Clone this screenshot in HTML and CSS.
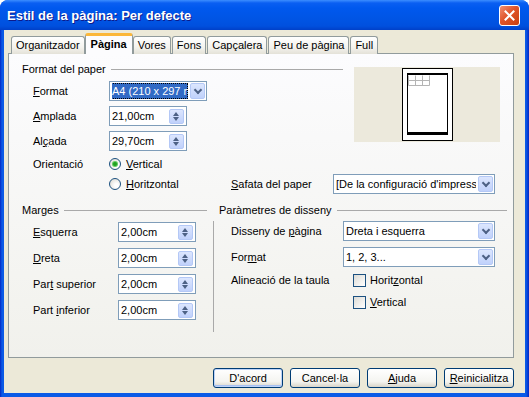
FILE: index.html
```html
<!DOCTYPE html>
<html lang="ca">
<head>
    <meta charset="UTF-8">
    <title>Estil de la pàgina: Per defecte</title>
    <link rel="stylesheet" href="styles.css">
</head>
<body>
<div class="window">
    <div class="titlebar">
        <span class="title">Estil de la pàgina: Per defecte</span>
        <span class="close">
            <svg width="11" height="11" viewBox="0 0 11 11"><path d="M1.5 1.5l8 8M9.5 1.5l-8 8" stroke="#fff" stroke-width="2" stroke-linecap="square"/></svg>
        </span>
    </div>

    <div class="client">
        <div class="tabs">
            <div class="tab">Organitzador</div>
            <div class="tab active">Pàgina</div>
            <div class="tab">Vores</div>
            <div class="tab">Fons</div>
            <div class="tab">Capçalera</div>
            <div class="tab">Peu de pàgina</div>
            <div class="tab">Full</div>
        </div>

        <div class="panel">
            <!-- Format del paper -->
            <div class="paper-top">
                <div class="paper-fields">
                    <div class="legend">Format del paper</div>
                    <div class="row first">
                        <span class="lbl"><u>F</u>ormat</span>
                        <div class="combo w-format">
                            <span class="val"><span class="picked">A4 (210 x 297 m</span></span>
                            <span class="drop"></span>
                        </div>
                    </div>
                    <div class="row">
                        <span class="lbl"><u>A</u>mplada</span>
                        <div class="spin"><span class="val">21,00cm</span><span class="updown"></span></div>
                    </div>
                    <div class="row">
                        <span class="lbl">Al<u>ç</u>ada</span>
                        <div class="spin"><span class="val">29,70cm</span><span class="updown"></span></div>
                    </div>
                </div>
                <div class="preview">
                    <svg width="51" height="73" viewBox="0 0 51 73">
                        <rect x="0.5" y="0.5" width="50" height="72" fill="#fff" stroke="#000"/>
                        <rect x="5.5" y="5.5" width="40" height="61" fill="#fff" stroke="#000"/>
                        <rect x="5" y="5" width="41" height="2" fill="#000"/>
                        <rect x="5" y="64" width="41" height="3" fill="#000"/>
                        <g stroke="#b4b4b4" fill="none">
                            <path d="M6.5 7.5v10M13.5 7.5v10M20.5 7.5v10M27.5 7.5v10"/>
                            <path d="M6.5 12.5h21M6.5 17.5h21"/>
                        </g>
                    </svg>
                </div>
            </div>

            <div class="row orient">
                <span class="lbl">Orientació</span>
                <span class="radio checked"></span>
                <span class="opt"><u>V</u>ertical</span>
            </div>
            <div class="row tray">
                <div class="radio-cell">
                    <span class="radio"></span>
                    <span class="opt"><u>H</u>oritzontal</span>
                </div>
                <span class="lbl lbl-tray"><u>S</u>afata del paper</span>
                <div class="combo w-tray">
                    <span class="val">[De la configuració d'impressc</span>
                    <span class="drop"></span>
                </div>
            </div>

            <!-- Marges / Paràmetres de disseny -->
            <div class="lower">
                <div class="margins">
                    <div class="legend">Marges</div>
                    <div class="row first">
                        <span class="lbl lbl-m"><u>E</u>squerra</span>
                        <div class="spin"><span class="val">2,00cm</span><span class="updown"></span></div>
                    </div>
                    <div class="row">
                        <span class="lbl lbl-m"><u>D</u>reta</span>
                        <div class="spin"><span class="val">2,00cm</span><span class="updown"></span></div>
                    </div>
                    <div class="row">
                        <span class="lbl lbl-m">Par<u>t</u> superior</span>
                        <div class="spin"><span class="val">2,00cm</span><span class="updown"></span></div>
                    </div>
                    <div class="row">
                        <span class="lbl lbl-m">Part <u>i</u>nferior</span>
                        <div class="spin"><span class="val">2,00cm</span><span class="updown"></span></div>
                    </div>
                </div>

                <div class="design">
                    <div class="legend">Paràmetres de disseny</div>
                    <div class="design-body">
                        <div class="row">
                            <span class="lbl lbl-d">Disseny de <u>p</u>àgina</span>
                            <div class="combo w-design">
                                <span class="val">Dreta i esquerra</span>
                                <span class="drop"></span>
                            </div>
                        </div>
                        <div class="row">
                            <span class="lbl lbl-d">For<u>m</u>at</span>
                            <div class="combo w-design">
                                <span class="val">1, 2, 3...</span>
                                <span class="drop"></span>
                            </div>
                        </div>
                        <div class="row check-row">
                            <span class="lbl lbl-c">Alineació de la taula</span>
                            <span class="check"></span>
                            <span class="opt">Horit<u>z</u>ontal</span>
                        </div>
                        <div class="row check-row second">
                            <span class="check"></span>
                            <span class="opt"><u>V</u>ertical</span>
                        </div>
                    </div>
                </div>
            </div>
        </div>

        <div class="buttons">
            <button class="btn default">D'acord</button>
            <button class="btn">Cancel·la</button>
            <button class="btn"><u>A</u>juda</button>
            <button class="btn"><u>R</u>einicialitza</button>
        </div>
    </div>
</div>
</body>
</html>
```

FILE: styles.css
```css
* { box-sizing: border-box; }
body {
    margin: 0;
    background: #fff;
    font-family: "Liberation Sans", Arial, sans-serif;
    font-size: 11px;
    color: #000;
}
u { text-decoration: underline; text-underline-offset: 1px; }

.window {
    width: 529px;
    height: 397px;
    display: flex;
    flex-direction: column;
    background: linear-gradient(to right, #0427c4, #0b5ae6 2px, #0b5ae6 526px, #0427c4);
    border-radius: 8px 8px 0 0;
    overflow: hidden;
}
.titlebar {
    height: 30px;
    flex: none;
    display: flex;
    align-items: center;
    padding: 0 9px 0 7px;
    background: linear-gradient(#3c8dff 0, #0a5ff2 3px, #0058ee 8px, #0055e5 18px, #0050de 26px, #0040c8 30px);
}
.title {
    color: #fff;
    font-weight: bold;
    font-size: 13px;
    text-shadow: 1px 1px #0d1a8a;
    margin-top: 1px;
}
.close {
    margin-left: auto;
    width: 21px;
    height: 21px;
    border: 1px solid #fff;
    border-radius: 3px;
    background: linear-gradient(135deg, #f19073, #e0542a 45%, #c9400f);
    display: flex;
    align-items: center;
    justify-content: center;
}

.client {
    flex: 1;
    margin: 0 4px 4px;
    background: #ece9d8;
    padding-top: 3px;
}

/* tabs */
.tabs {
    display: flex;
    align-items: flex-end;
    height: 21px;
    margin-left: 7px;
}
.tab {
    height: 18px;
    padding: 0 4px;
    margin-right: 1px;
    line-height: 17px;
    border: 1px solid #919b9c;
    border-bottom: none;
    border-radius: 3px 3px 0 0;
    background: linear-gradient(#fff, #f4f3ee 60%, #e4e2d8);
}
.tab.active {
    height: 21px;
    margin-left: -1px;
    margin-right: 0;
    padding: 0 5px;
    border-top: 3px solid #fbb73a;
    background: #fcfcfe;
    font-weight: bold;
    line-height: 16px;
    position: relative;
    z-index: 1;
}

.panel {
    width: 506px;
    height: 305px;
    margin: -1px 0 0 4px;
    padding: 9px 0 0 13px;
    border: 1px solid #919b9c;
    background: linear-gradient(#fcfcfe, #f1f1ec);
}

/* group titles with a rule */
.legend {
    display: flex;
    align-items: center;
    height: 13px;
    line-height: 13px;
    white-space: nowrap;
}
.legend::after {
    content: "";
    flex: 1;
    height: 1px;
    margin-left: 5px;
    background: #a9a9a9;
}

.row {
    display: flex;
    align-items: center;
    height: 20px;
    margin-top: 5px;
}
.row.first { margin-top: 5px; }
.lbl { width: 76px; margin-left: 11px; white-space: nowrap; flex: none; }
.lbl-m { width: 85px; }
.lbl-d { width: 112px; margin-left: 0; }
.lbl-c { width: 122px; margin-left: 0; }
.lbl-tray { width: 102px; margin-left: 0; }

/* fields */
.combo, .spin {
    height: 20px;
    flex: none;
    display: flex;
    align-items: center;
    border: 1px solid #7f9db9;
    background: #fff;
    padding: 0 1px 0 2px;
}
.val {
    flex: 1;
    overflow: hidden;
    white-space: nowrap;
}
.picked {
    display: block;
    margin-left: -1px;
    padding-left: 1px;
    background: #316ac5;
    color: #fff;
    outline: 1px dotted #000;
    outline-offset: -1px;
    line-height: 16px;
}
.w-format { width: 98px; }
.w-tray { width: 162px; }
.w-design { width: 152px; }
.spin { width: 78px; padding-right: 2px; }

.drop, .updown {
    width: 15px;
    height: 16px;
    flex: none;
    margin-left: 2px;
    border: 1px solid #b4c8f6;
    border-radius: 2px;
    background: linear-gradient(#dce6fe, #c0d1fb);
    position: relative;
}
.drop::before {
    content: "";
    position: absolute;
    left: 4px;
    top: 3px;
    width: 4px;
    height: 4px;
    border-right: 2px solid #4d6185;
    border-bottom: 2px solid #4d6185;
    transform: rotate(45deg);
}
.updown { height: 15px; }
.updown::before, .updown::after {
    content: "";
    position: absolute;
    left: 3px;
    border-left: 3.5px solid transparent;
    border-right: 3.5px solid transparent;
}
.updown::before { top: 2px; border-bottom: 4px solid #4d6185; }
.updown::after { bottom: 2px; border-top: 4px solid #4d6185; }

/* paper block */
.paper-top { display: flex; }
.paper-fields { width: 321px; }
.preview {
    width: 146px;
    height: 75px;
    margin: 4px 0 0 11px;
    background: #ece9dc;
    display: flex;
    align-items: center;
    justify-content: center;
}

.row.orient { height: 12px; margin-top: 7px; }
.row.tray { margin-top: 4px; }
.radio-cell {
    width: 122px;
    margin-left: 87px;
    display: flex;
    align-items: center;
}
.radio {
    width: 12px;
    height: 12px;
    flex: none;
    border: 1px solid #1c5180;
    border-radius: 50%;
    background: radial-gradient(circle at 65% 65%, #fff 20%, #dcdad2 90%);
    display: flex;
    align-items: center;
    justify-content: center;
}
.radio.checked::before {
    content: "";
    width: 4px;
    height: 4px;
    border-radius: 50%;
    background: #21a121;
    box-shadow: 0 0 0 1px #5fcc5f;
}
.opt { margin-left: 5px; white-space: nowrap; }

/* margins and layout block */
.lower {
    display: grid;
    grid-template-columns: 185px 294px;
    column-gap: 6px;
    margin-top: 10px;
}
.margins .row { margin-top: 6px; }
.margins .row.first { margin-top: 5px; }
.design .legend { padding-left: 6px; }
.design-body {
    height: 111px;
    margin-top: 4px;
    padding-left: 17px;
    border-left: 1px solid #a9a9a9;
}
.design-body .row:first-child { margin-top: 0; }
.design-body .row { margin-top: 6px; }
.check-row { height: 14px; }
.check-row.second { margin-top: 8px; padding-left: 122px; }
.check {
    width: 13px;
    height: 13px;
    flex: none;
    border: 1px solid #1c5180;
    background: linear-gradient(135deg, #dcdbd5, #fff);
}
.check-row .opt { margin-left: 4px; }

/* bottom buttons */
.buttons {
    display: flex;
    justify-content: flex-end;
    gap: 7px;
    margin-top: 10px;
    padding-right: 11px;
}
.btn {
    width: 70px;
    height: 20px;
    padding: 0;
    font-family: inherit;
    font-size: 11px;
    color: #000;
    border: 1px solid #003c74;
    border-radius: 3px;
    background: linear-gradient(#fff, #f4f4f0 70%, #d8d4c8);
}
.btn.default { box-shadow: inset 0 0 0 1px #bdd3f8, inset 0 -1px 0 1px #a7c1f2; }
```
